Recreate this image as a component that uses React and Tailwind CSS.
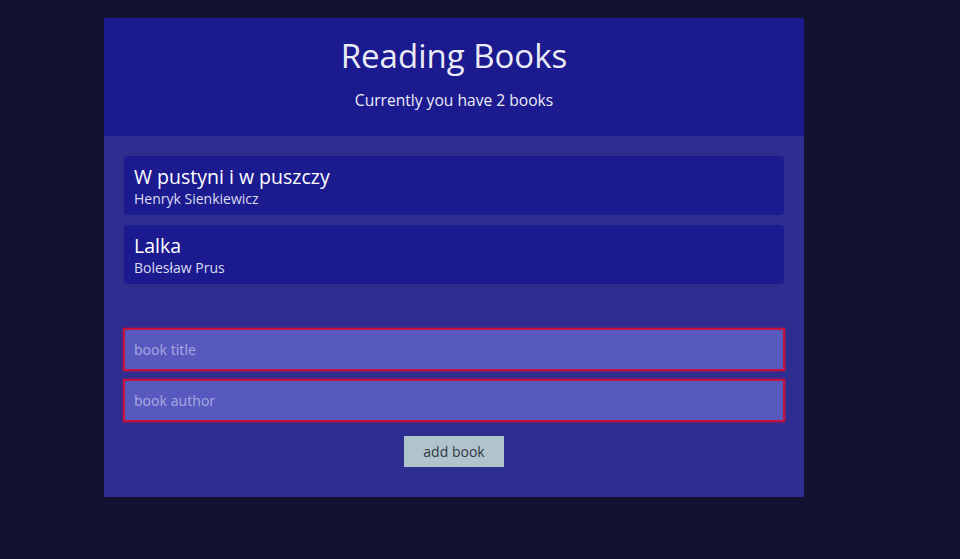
export default function App() {
  const books = [
    { title: 'W pustyni i w puszczy', author: 'Henryk Sienkiewicz' },
    { title: 'Lalka', author: 'Bolesław Prus' },
  ];

  return (
    <div className="min-h-[559px] bg-[#121331] pt-[18px] font-['Open_Sans',sans-serif]">
      <div className="ml-[104px] w-[700px] bg-[#2e2e90]">
        {/* Header */}
        <div className="h-[118px] bg-[#1b1b8f] pt-[18px] text-center text-[#ececf6]">
          <h1 className="text-[33px] leading-[40px]">Reading Books</h1>
          <p className="mt-[14px] text-[15.6px] leading-[20px]">Currently you have {books.length} books</p>
        </div>

        {/* List */}
        <div className="flex flex-col gap-[10px] px-5 pt-5">
          {books.map((b) => (
            <div key={b.title} className="h-[59px] rounded bg-[#1b1b8f] px-[10px] pt-[8px] text-white">
              <div className="text-[19.5px] leading-[26px] font-medium">{b.title}</div>
              <div className="text-[14px] leading-[18px] text-[#dcdcf0]">{b.author}</div>
            </div>
          ))}
        </div>

        {/* Form */}
        <form className="flex flex-col px-[19px] pt-[44px] pb-[30px]" onSubmit={(e) => e.preventDefault()}>
          <input
            placeholder="book title"
            className="h-[43px] border-2 border-[#c4123e] bg-[#5759bf] px-[9px] text-[14px] text-white shadow-[0_0_2px_#c4123e] outline-none placeholder:text-[#a4a6e0] font-['Noto_Sans',sans-serif]"
          />
          <input
            placeholder="book author"
            className="mt-[8px] h-[43px] border-2 border-[#c4123e] bg-[#5759bf] px-[9px] text-[14px] text-white shadow-[0_0_2px_#c4123e] outline-none placeholder:text-[#a4a6e0] font-['Noto_Sans',sans-serif]"
          />
          <button className="mx-auto mt-[14px] h-[31px] w-[100px] bg-[#b0c4ce] text-[14px] text-[#333a40]">
            add book
          </button>
        </form>
      </div>
    </div>
  );
}
